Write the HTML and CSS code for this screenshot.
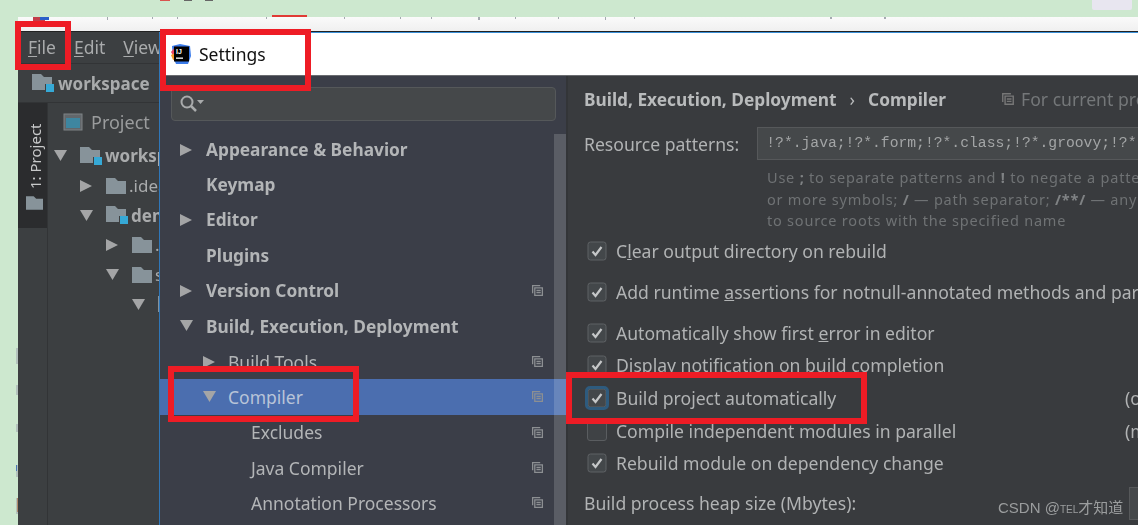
FILE: index.html
```html
<!DOCTYPE html>
<html lang="en">
<head>
<meta charset="utf-8">
<title>Settings</title>
<link rel="stylesheet" href="styles.css">
</head>
<body>
<svg class="defs" width="0" height="0">
  <defs>
    <symbol id="copy" viewBox="0 0 12 12"><path d="M1.500 8.500v-7h7M3.500 3.500h7v7h-7z M5 6h4M5 8h4" fill="none" stroke="currentColor" stroke-width="1.200"/></symbol>
    <symbol id="folder" viewBox="0 0 20 16"><path d="M0 0h9l3 3h8v13H0z" fill="#87939a"/></symbol>
    <symbol id="module" viewBox="0 0 22 18"><path d="M0 0h9l3 3h8v7h-7v6H0z" fill="#87939a"/><rect x="14" y="10" width="8" height="8" fill="#36a9d6"/></symbol>
    <symbol id="right" viewBox="0 0 12 12"><path d="M0 0l12 6-12 6z" fill="#a4a5a6"/></symbol>
    <symbol id="down" viewBox="0 0 13 11"><path d="M0 0h13L6.500 11z" fill="#a4a5a6"/></symbol>
    <symbol id="check" viewBox="0 0 20 20"><rect x="1" y="1" width="18" height="18" rx="2.500" fill="#43474a" stroke="#5f6265"/><path d="M5.500 10.500l3 3.500 6-8" fill="none" stroke="#c5c7c8" stroke-width="2.200"/></symbol>
  </defs>
</svg>
<div class="stage">
  <div class="top-green"></div>
  <div class="browser-strip"><span class="red-tab"></span></div>
  <div class="ide">
    <div class="menubar">
      <span class="menu"><u>F</u>ile</span><span class="menu"><u>E</u>dit</span><span class="menu"><u>V</u>iew</span>
    </div>
    <div class="crumbs">
      <svg class="crumb-icon"><use href="#module"/></svg><b>workspace</b>
    </div>
    <div class="ide-body">
      <div class="stripe">
        <div class="stripe-tab">
          <span class="stripe-label">1: Project</span>
          <svg class="stripe-icon"><use href="#folder"/></svg>
        </div>
      </div>
      <div class="project">
        <div class="project-head">
          <svg class="project-icon" viewBox="0 0 20 18"><rect x="1" y="1" width="18" height="16" fill="#62676b" stroke="#7e8386"/><rect x="3" y="5" width="14" height="10" fill="#3e86a0"/></svg>
          <span>Project</span>
        </div>
        <div class="tree">
          <div class="node l0"><svg class="tw-down"><use href="#down"/></svg><svg class="tree-mod"><use href="#module"/></svg><b>workspace</b></div>
          <div class="node l1"><svg class="tw-right"><use href="#right"/></svg><svg class="tree-fold"><use href="#folder"/></svg><span>.idea</span></div>
          <div class="node l1"><svg class="tw-down"><use href="#down"/></svg><svg class="tree-mod"><use href="#module"/></svg><b>demo</b></div>
          <div class="node l2"><svg class="tw-right"><use href="#right"/></svg><svg class="tree-fold"><use href="#folder"/></svg><span>.mvn</span></div>
          <div class="node l2"><svg class="tw-down"><use href="#down"/></svg><svg class="tree-fold"><use href="#folder"/></svg><span>src</span></div>
          <div class="node l3"><svg class="tw-down"><use href="#down"/></svg><svg class="tree-fold"><use href="#folder"/></svg><span>main</span></div>
        </div>
      </div>
    </div>
  </div>

  <div class="dialog">
    <div class="titlebar">
      <svg class="ij" viewBox="0 0 22 22">
        <path d="M2 3l8-2 10 2 1 10-3 8-12 0-3-7z" fill="#3a7bea"/>
        <path d="M1 9l5-6 4 6-5 7z" fill="#f0425f"/>
        <path d="M1 12l4-2 2 6-4 1z" fill="#f79a2a"/>
        <rect x="4" y="3.500" width="15" height="15" fill="#000"/>
        <text x="6" y="11" class="ij-text">IJ</text>
        <rect x="6" y="14.500" width="7" height="1.300" fill="#fff"/>
      </svg>
      <span class="title">Settings</span>
    </div>
    <div class="panes">
      <div class="sidebar">
        <div class="search">
          <svg class="search-icon" viewBox="0 0 26 20"><circle cx="8" cy="8" r="5.500" fill="none" stroke="#a9abac" stroke-width="2"/><path d="M12 12l5 5" stroke="#a9abac" stroke-width="2.500"/><path d="M18 6h7l-3.500 4z" fill="#a9abac"/></svg>
        </div>
        <div class="nav">
          <div class="row top"><svg class="tw-right"><use href="#right"/></svg><b>Appearance &amp; Behavior</b></div>
          <div class="row top"><b>Keymap</b></div>
          <div class="row top"><svg class="tw-right"><use href="#right"/></svg><b>Editor</b></div>
          <div class="row top"><b>Plugins</b></div>
          <div class="row top"><svg class="tw-right"><use href="#right"/></svg><b>Version Control</b><svg class="copy"><use href="#copy"/></svg></div>
          <div class="row top"><svg class="tw-down"><use href="#down"/></svg><b>Build, Execution, Deployment</b></div>
          <div class="row sub"><svg class="tw-right"><use href="#right"/></svg><span>Build Tools</span><svg class="copy"><use href="#copy"/></svg></div>
          <div class="row sub selected"><svg class="tw-down"><use href="#down"/></svg><span>Compiler</span><svg class="copy"><use href="#copy"/></svg></div>
          <div class="row leaf"><span>Excludes</span><svg class="copy"><use href="#copy"/></svg></div>
          <div class="row leaf"><span>Java Compiler</span><svg class="copy"><use href="#copy"/></svg></div>
          <div class="row leaf"><span>Annotation Processors</span><svg class="copy"><use href="#copy"/></svg></div>
        </div>
        <div class="scrollbar"></div>
      </div>
      <div class="content">
        <div class="breadcrumb">
          <b>Build, Execution, Deployment</b><span class="sep">›</span><b>Compiler</b>
          <svg class="scope-icon"><use href="#copy"/></svg><span class="scope">For current project</span>
        </div>
        <div class="patterns">
          <span class="label">Resource patterns:</span>
          <div class="pattern-box">!?*.java;!?*.form;!?*.class;!?*.groovy;!?*.scala;!?*.flex;!?*.kt;!?*.clj;!?*.aj</div>
        </div>
        <div class="hint">
          <div>Use <b>;</b> to separate patterns and <b>!</b> to negate a pattern. Accepted wildcards: <b>?</b> — exactly one symbol; <b>*</b> — zero</div>
          <div>or more symbols; <b>/</b> — path separator; <b>/**/</b> — any number of directories; <b>&lt;dir_name&gt;:&lt;pattern&gt;</b> — restrict</div>
          <div>to source roots with the specified name</div>
        </div>
        <div class="opt first"><svg class="cb"><use href="#check"/></svg><span>C<u>l</u>ear output directory on rebuild</span></div>
        <div class="opt second"><svg class="cb"><use href="#check"/></svg><span>Add runtime <u>a</u>ssertions for notnull-annotated methods and parameters</span></div>
        <div class="opt third"><svg class="cb"><use href="#check"/></svg><span>Automatically show first <u>e</u>rror in editor</span></div>
        <div class="opt tight"><svg class="cb"><use href="#check"/></svg><span>Display notification on build completion</span></div>
        <div class="opt tight focus"><svg class="cb"><use href="#check"/></svg><span>Build project automatically</span><span class="note">(only works while not running / debugging)</span></div>
        <div class="opt tight"><span class="cb-empty"></span><span>Compile independent modules in parallel</span><span class="note">(may require larger heap size)</span></div>
        <div class="opt tight"><svg class="cb"><use href="#check"/></svg><span>Rebuild module on dependency change</span></div>
        <div class="heap"><span>Build process heap size (Mbytes):</span><span class="heap-input"></span></div>
      </div>
    </div>
  </div>

  <svg class="scraps" width="1138" height="525" viewBox="0 0 1138 525">
    <path d="M160 0h10v1h-10z" fill="#d9534f"/><path d="M184 0h8v1h-8zM205 0h8v1h-8z" fill="#666"/>
    <path d="M33 17h12v4h-12z" fill="#c33d4a"/><path d="M40 17h9v3h-9z" fill="#2b5fc9"/>
    <path d="M107 17h1v3h-1zM152 17h1v2h-1zM177 17h1v2h-1zM266 17h1v2h-1zM344 17h1v2h-1zM400 17h1v2h-1zM431 17h1v2h-1zM478 17h2v3h-2zM515 17h1v2h-1zM558 17h1v2h-1zM605 17h1v3h-1zM634 17h1v2h-1zM830 17h2v2h-2zM884 17h2v2h-2z" fill="#a4a9b0"/>
    <path d="M16 348h2v16h-2zM16 385h2v10h-2zM16 424h2v8h-2zM16 465h2v12h-2zM16 498h2v16h-2z" fill="#b4c2bd"/>
    <path d="M16 465h1v6h-1z" fill="#4b78b5"/><path d="M17 498h1v14h-1z" fill="#b08a6a"/>
    <path d="M1092 0h40v8q0 2-2 2h-36q-2 0-2-2z" fill="#e8e6f0"/>
  </svg>
  <div class="mark mark-file"></div>
  <div class="mark mark-settings"></div>
  <div class="mark mark-compiler"></div>
  <div class="mark mark-build"></div>
  <div class="watermark">CSDN @<small>TEL</small>才知道</div>
</div>
</body>
</html>
```

FILE: styles.css
```css
* { box-sizing: border-box; }
html, body { margin: 0; padding: 0; }
body { width: 1138px; height: 525px; overflow: hidden; background: #cde8cf; font-family: "Noto Sans", "Open Sans", sans-serif; }
.defs { position: absolute; }
.stage { position: relative; width: 1138px; height: 525px; overflow: hidden; display: flex; flex-direction: column; }
.top-green { height: 17px; flex: none; }
.browser-strip { height: 14px; flex: none; margin-left: 18px; background: linear-gradient(#fafafa, #f0f0f0); position: relative; }
.red-tab { position: absolute; left: 254px; top: -2px; width: 35px; height: 2px; background: #e03a35; }
.ide { flex: 1; margin-left: 18px; background: #3c3f41; display: flex; flex-direction: column; color: #b5b7b8; border-top: 1px solid #222; min-height: 0; filter: blur(0.3px); }
.menubar { height: 31px; flex: none; display: flex; align-items: center; padding: 0 0 2px 10px; gap: 18px; font-size: 17.500px; color: #a9abac; }
.menu u { text-underline-offset: 2px; }
.crumbs { height: 40px; flex: none; display: flex; align-items: center; padding-left: 14px; gap: 4px; font-size: 17px; border-top: 1px solid #323436; border-bottom: 1px solid #323436; color: #a9abac; }
.crumb-icon { width: 22px; height: 18px; }
.ide-body { flex: 1; display: flex; min-height: 0; }
.stripe { width: 30px; flex: none; border-right: 1px solid #323436; }
.stripe-tab { height: 125px; background: #2b2c2e; display: flex; flex-direction: column; align-items: center; padding: 18px 0 0 4px; gap: 7px; }
.stripe-label { writing-mode: vertical-rl; transform: rotate(180deg); font-size: 15px; color: #c8c9ca; line-height: 18px; height: 68px; white-space: nowrap; }
.stripe-icon { width: 17px; height: 14px; }
.project { flex: 1; padding-left: 15px; }
.project-head { height: 38px; display: flex; align-items: center; gap: 8px; font-size: 18px; color: #9a9c9d; }
.project-icon { width: 20px; height: 18px; }
.tree { display: flex; flex-direction: column; }
.node { height: 29.700px; display: flex; align-items: center; font-size: 17px; white-space: nowrap; color: #a9abac; }
.node svg { flex: none; }
.node .tw-right, .node .tw-down { margin-right: 13px; }
.node .tw-right { margin-right: 14px; }
.tree-fold, .tree-mod { margin-right: 3px; }
.l0 { margin-left: -9px; }
.l1 { margin-left: 17px; }
.l2 { margin-left: 43px; }
.l3 { margin-left: 69px; }
.tw-right { width: 12px; height: 12px; flex: none; }
.tw-down { width: 13px; height: 11px; flex: none; }
.tree-fold { width: 20px; height: 16px; }
.tree-mod { width: 22px; height: 18px; }

.dialog { position: absolute; left: 159px; top: 32px; width: 979px; height: 493px; display: flex; flex-direction: column; border-left: 1px solid #2f77b8; border-top: 1px solid #3a8fd6; filter: blur(0.3px); }
.titlebar { height: 43px; flex: none; background: #fff; display: flex; align-items: center; padding-left: 10px; gap: 7px; color: #111; font-size: 17.500px; border-bottom: 1px solid #6a6c70; }
.ij { width: 22px; height: 22px; }
.ij-text { font: bold 7px "Liberation Sans", sans-serif; fill: #fff; }
.panes { flex: 1; display: flex; min-height: 0; }
.sidebar { width: 408px; flex: none; background: #3b3e48; position: relative; border-right: 2px solid #333538; }
.search { height: 34px; margin: 11px 10px 0 11px; background: #45484a; border: 1px solid #55585a; border-radius: 4px; display: flex; align-items: center; padding-left: 7px; }
.search-icon { width: 26px; height: 20px; }
.nav { margin-top: 10.500px; display: flex; flex-direction: column; }
.row { height: 35.400px; display: flex; align-items: center; font-size: 17.500px; color: #b3b5b7; white-space: nowrap; position: relative; }
.row b { display: block; font-size: 17.300px; }
.row span { display: block; }
.top { padding-left: 46px; }
.top .tw-right, .top .tw-down { position: absolute; left: 20px; top: 12px; }
.sub { padding-left: 68px; }
.sub .tw-right, .sub .tw-down { position: absolute; left: 43px; top: 12px; }
.leaf { padding-left: 91px; }
.selected { background: #4b6eaf; color: #b8c4d8; }
.copy { position: absolute; left: 371px; top: 11px; width: 13px; height: 13px; color: #8c8f92; }
.scrollbar { position: absolute; left: 394px; top: 58px; bottom: 0; width: 12px; background: rgba(255, 255, 255, 0.16); }

.content { flex: 1; background: #393b3e; padding: 10px 0 0 16px; min-width: 0; overflow: hidden; color: #b1b3b4; font-size: 17.600px; white-space: nowrap; }
.breadcrumb { height: 26px; display: flex; align-items: center; color: #b9bbbc; position: relative; }
.breadcrumb b { font-size: 17.300px; flex: none; }
.sep { margin: 0 13px; flex: none; }
.scope-icon { flex: none; width: 14px; height: 14px; margin-left: 55px; margin-right: 6px; color: #777; }
.scope { color: #747779; flex: none; }
.patterns { display: flex; align-items: center; margin-top: 15px; gap: 18px; }
.label { flex: none; }
.pattern-box { height: 33px; flex: none; width: 500px; border: 1px solid #56585a; background: #45484a; font: 14.700px/31px "Liberation Mono", "DejaVu Sans Mono", monospace; color: #a3a5a6; padding-left: 8px; overflow: hidden; }
.hint { margin: 7px 0 0 183px; font-size: 14.500px; line-height: 21.500px; color: #6f7274; letter-spacing: 0.780px; }
.hint b { color: #7f8284; }
.opt { display: flex; align-items: center; height: 32px; position: relative; }
.opt .cb, .cb-empty { width: 20px; height: 20px; flex: none; margin: 0 9px 0 3px; }
.cb-empty { display: block; border: 1px solid #5a5d60; border-radius: 3px; background: #3f4245; }
.first { margin-top: 3.500px; }
.second { margin-top: 9px; }
.third { margin-top: 9px; }
.tight { height: 32.700px; }
.focus .cb { outline: 3px solid #2e5b7e; outline-offset: -1px; border-radius: 3px; }
.note { position: absolute; left: 541px; }
.heap { display: flex; align-items: center; height: 32px; margin-top: 7px; position: relative; }
.heap-input { position: absolute; left: 545px; top: 0; width: 60px; height: 33px; background: #45484a; border: 1px solid #56585a; }

.scraps { position: absolute; left: 0; top: 0; pointer-events: none; }
.mark { position: absolute; border: 6px solid #ee1c25; pointer-events: none; }
.mark-file { left: 15px; top: 21px; width: 56px; height: 49px; }
.mark-settings { left: 160px; top: 29px; width: 151px; height: 62px; }
.mark-compiler { left: 168px; top: 366px; width: 191px; height: 56px; }
.mark-build { left: 566px; top: 372px; width: 301px; height: 52px; }
.watermark { position: absolute; left: 998px; top: 496px; font: 15px "Liberation Sans", "Noto Sans CJK SC", sans-serif; color: #9b9d9e; white-space: nowrap; }
.watermark small { font-size: 10px; }
```
